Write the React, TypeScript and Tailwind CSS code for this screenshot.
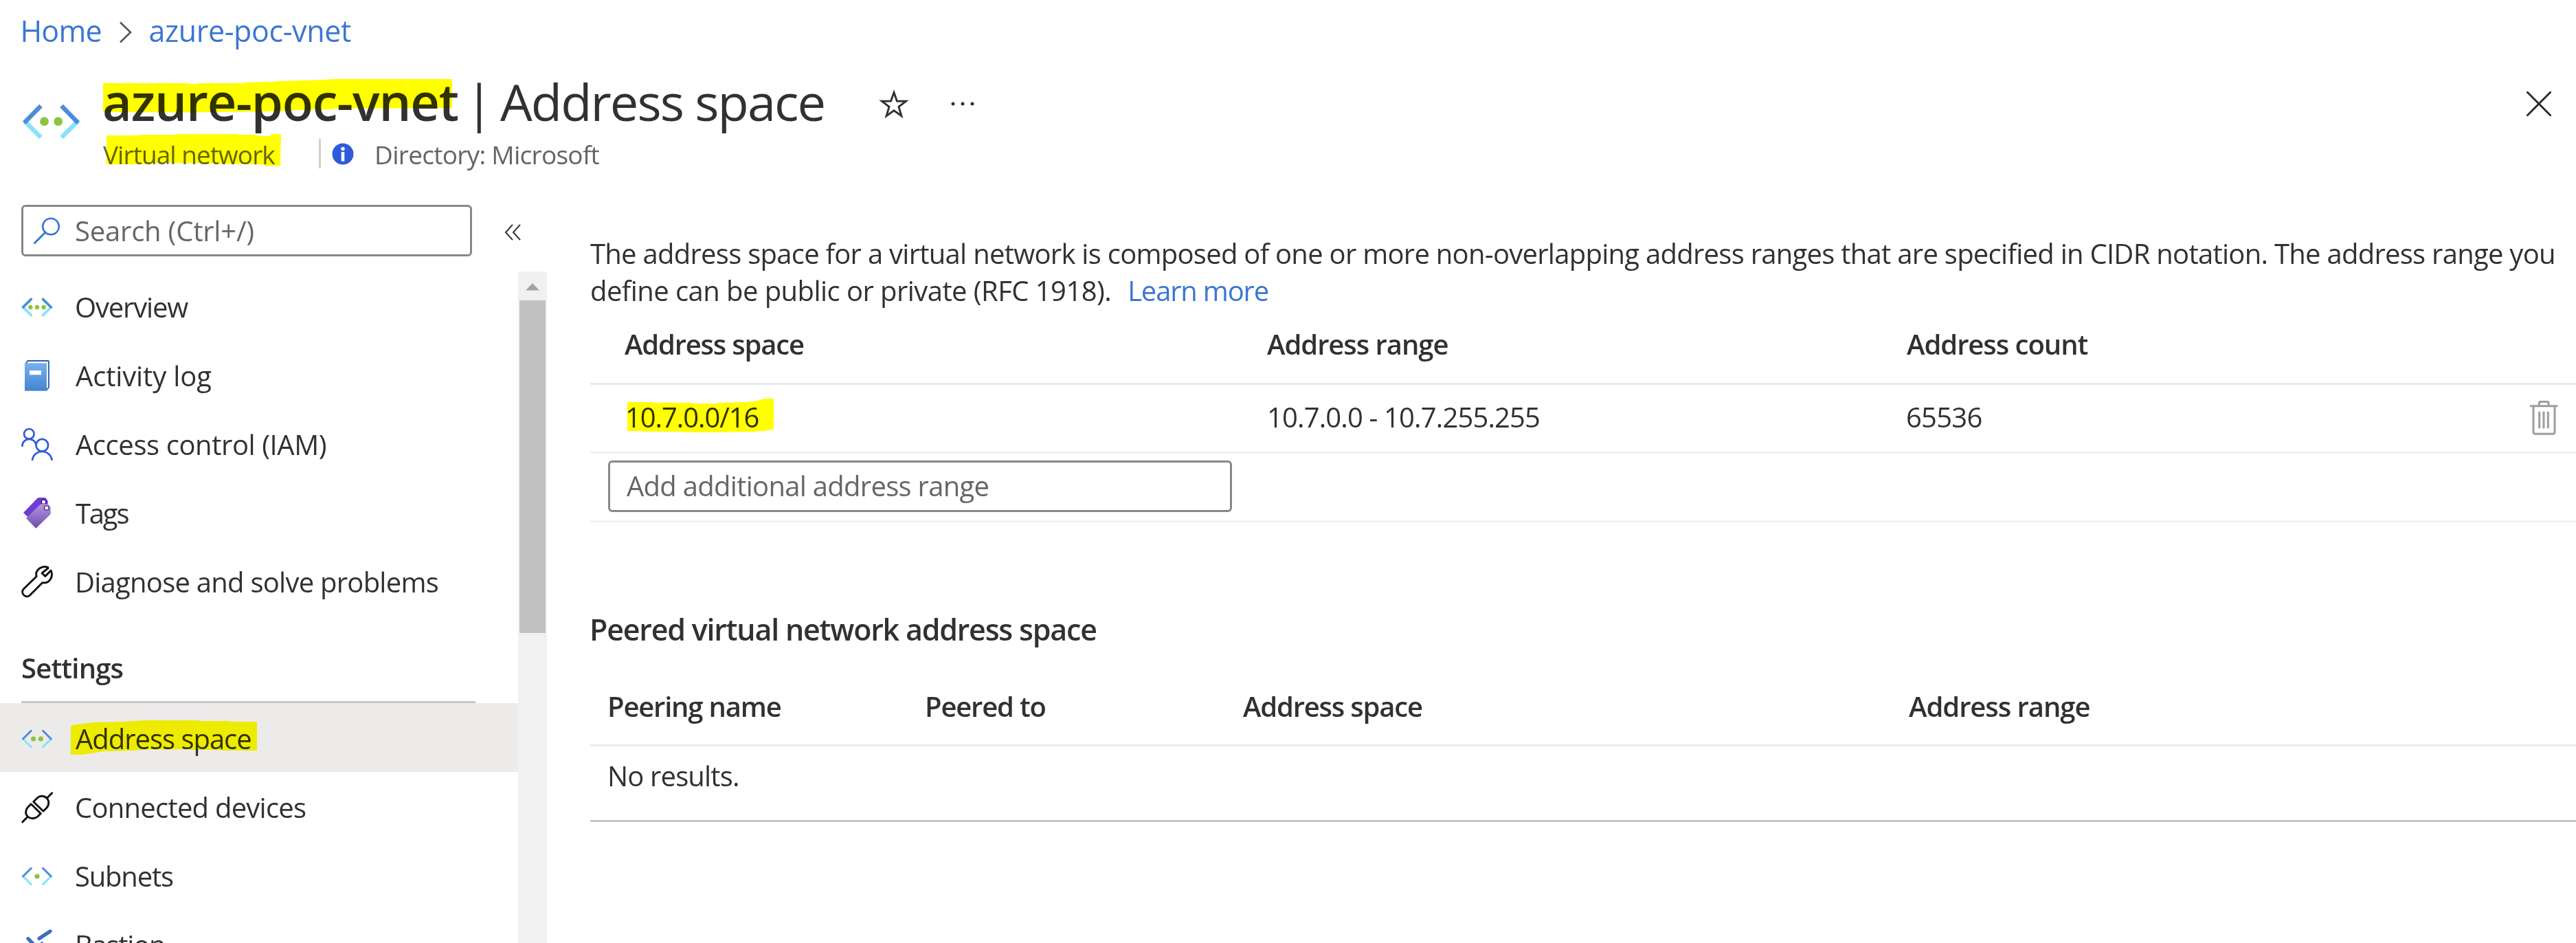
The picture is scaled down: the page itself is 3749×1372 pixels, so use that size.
import React from "react";

type IconProps = { children: React.ReactNode; className?: string };

function Icon({ children, className = "" }: IconProps) {
  return (
    <svg viewBox="0 0 48 48" fill="none" className={`h-12 w-12 shrink-0 overflow-visible ${className}`}>
      {children}
    </svg>
  );
}

function Brackets({ dots, weight = 3, r = 3.6 }: { dots: number[]; weight?: number; r?: number }) {
  return (
    <>
      <g strokeWidth={weight} strokeLinecap="round">
        <path d="M15.3 37.7 L3.5 26 M32.5 37.7 L44.3 26" stroke="#86e2fd" />
        <path d="M15.3 14.3 L3.5 26 M32.5 14.3 L44.3 26" stroke="#4a8edb" />
      </g>
      {dots.map((x) => (
        <circle key={x} cx={x} cy="26" r={r} fill="#8bc540" />
      ))}
    </>
  );
}

const OverviewIcon = () => (
  <Icon>
    <Brackets dots={[14.3, 24, 33.7]} weight={3.8} r={3.2} />
  </Icon>
);
const AddressIcon = () => (
  <Icon>
    <Brackets dots={[18.6, 29.3]} />
  </Icon>
);
const SubnetIcon = () => (
  <Icon>
    <Brackets dots={[24]} />
  </Icon>
);

const LogIcon = () => (
  <Icon>
    <defs>
      <linearGradient id="log" x1="0" y1="0" x2="0" y2="1">
        <stop stopColor="#77b1ee" />
        <stop offset="1" stopColor="#4583d1" />
      </linearGradient>
    </defs>
    <path d="M7.5 8 L10.5 4 H40 Q41 4 41 5 V42.5 L37.5 47" fill="#fff" stroke="#2a5ba6" strokeWidth="1.8" />
    <rect x="6" y="7.3" width="32" height="40.5" rx="1" fill="url(#log)" />
    <rect x="13" y="18" width="17" height="6.3" fill="#fff" />
  </Icon>
);

const AccessIcon = () => (
  <Icon>
    <g stroke="#2f5bdb" strokeWidth="2.7">
      <circle cx="12.3" cy="10.3" r="7.3" />
      <path d="M2.3 28.7 C2.3 22.5 6.5 18 12.3 18 C17 18 21 20.8 22.3 25.5" />
      <circle cx="31.3" cy="26.7" r="8.8" />
      <path d="M17 49 C17.5 41.5 23.5 36 31.3 36 C39 36 45 41.5 45.6 49" />
    </g>
  </Icon>
);

const TagsIcon = () => (
  <Icon>
    <defs>
      <linearGradient id="tag" x1="0" y1="0" x2="0" y2="1">
        <stop stopColor="#b796e0" />
        <stop offset="1" stopColor="#6a4bad" />
      </linearGradient>
    </defs>
    <path d="M4 25 L24 4.3 Q25.3 3 27 3 H34.5 Q36 3 37 4.2 L39.7 8 V14 L10.3 31 Z" fill="#6f3dd2" />
    <circle cx="33.5" cy="9.3" r="3.3" fill="#fff" stroke="#3a1d7f" strokeWidth="1.6" />
    <path d="M8 33 L28 13.5 Q29.3 12.3 31 12.3 H38.5 Q40 12.3 41 13.5 L43.7 17 V27 L22.3 47.7 Z" fill="url(#tag)" />
    <circle cx="37.8" cy="18" r="3.3" fill="#fff" stroke="#5c369e" strokeWidth="1.6" />
  </Icon>
);

const WrenchIcon = () => (
  <Icon>
    <path
      d="M41 5 C31.5 .5 20.5 8 23 17.8 L4.3 36 C-1 42 7.5 50.5 13.3 45.2 L31.8 26.7 C42 29 48 18 44.2 9 L35.8 17.4 L31 12.8 L40.8 5"
      stroke="#111"
      strokeWidth="2.9"
      strokeLinejoin="round"
    />
  </Icon>
);

const PlugIcon = () => (
  <Icon>
    <g stroke="#111" strokeWidth="2.9" strokeLinecap="round" strokeLinejoin="round">
      <path d="M45.7 4.7 L38.3 12.2 M2.7 47 L10.3 39.3" />
      <path d="M18.7 17.5 L33 31.3 L37.5 26.8 C42 22 41.5 15.5 38 12.2 C34 8.3 28 8.5 24.5 11.8 Z" />
      <path d="M15.2 20.8 L29.3 34.6 L24.8 39 C20.5 42.8 14 42.5 10.5 39.2 C6.5 35.3 6.8 29.5 10.3 25.8 Z" />
    </g>
  </Icon>
);

const BastionIcon = () => (
  <Icon>
    <g stroke="#3a6fc4" strokeWidth="5.2" strokeLinecap="round">
      <path d="M43 6 L27 16.5 M11 16.7 L22 28 M31 24 L40 34" />
    </g>
  </Icon>
);

type NavItem = { label: string; cls: string; icon: () => React.ReactElement; active?: boolean };

const topItems: NavItem[] = [
  { label: "Overview", cls: "tracking-[-1.18px] pl-[31px]", icon: OverviewIcon },
  { label: "Activity log", cls: "tracking-[-0.14px] pl-[32px]", icon: LogIcon },
  { label: "Access control (IAM)", cls: "tracking-[-0.42px] pl-[32px]", icon: AccessIcon },
  { label: "Tags", cls: "tracking-[-2.2px] pl-[32px]", icon: TagsIcon },
  { label: "Diagnose and solve problems", cls: "tracking-[-0.75px] pl-[31px]", icon: WrenchIcon },
];

const settingsItems: NavItem[] = [
  { label: "Address space", cls: "tracking-[-1.02px] pl-[32px]", icon: AddressIcon, active: true },
  { label: "Connected devices", cls: "tracking-[-0.76px] pl-[31px]", icon: PlugIcon },
  { label: "Subnets", cls: "tracking-[-1.2px] pl-[31px]", icon: SubnetIcon },
  { label: "Bastion", cls: "tracking-[-1.26px] pl-[31px]", icon: BastionIcon },
];

function NavRow({ item }: { item: NavItem }) {
  const I = item.icon;
  return (
    <li className={`flex h-[100px] shrink-0 items-center pl-[30px] ${item.active ? "bg-[#edebe9]" : ""}`}>
      <I />
      <span className={`pt-[4px] ${item.cls}`}>{item.label}</span>
    </li>
  );
}

const highlights = [
  "150,121 272,121 273,122 288,122 288,121 355,121 355,120 394,119 407,118 444,117 472,116 485,115 658,115 658,157 486,158 486,159 440,160 410,161.5 370,162.5 320,163 272,163.5 150,163",
  "155,197 203,197 203,196 257,196 257,195 347,195 347,196 373,196 373,197 386,198 394,198 394,195 409,195 408,241 388,242 385,240 371,239 310,238 240,237 200,239 155,239",
  "103,1056 110,1054 129,1052 135,1051 178,1050 197,1049 212,1048 290,1048 291,1049 335,1049 336,1050 374,1050 374,1092 321,1092 320,1091 276,1091 276,1090 212,1090.5 193,1092 150,1093 140,1095 120,1098 103,1098",
  "913,585 951,585 951,586 1009,586 1010,587 1044,587 1044,586 1085,585 1098,584 1106,582 1112,580 1126,580 1126,624 1119,626 1110,627 1098,628 1058,628.5 1058,629 995,629 995,628 936,628 935,627 913,627",
];

function Header() {
  return (
    <header className="flex h-[298px] shrink-0 flex-col">
      <nav className="flex h-[97px] items-start pt-[15px] text-[43px] leading-[60px] text-[#3b76d2]">
        <a className="ml-[29.5px] w-[144px] tracking-[-0.83px]">Home</a>
        <svg viewBox="0 0 18 32" className="mt-[16px] h-8 w-[18px] overflow-visible" fill="none">
          <path d="M1 1.5 L16 16 L1 30.5" stroke="#555" strokeWidth="2.6" />
        </svg>
        <a className="ml-[25px] tracking-[-0.4px]">azure-poc-vnet</a>
      </nav>
      <div className="flex">
        <svg viewBox="0 0 83 50" className="mt-[55px] ml-[33px] h-[50px] w-[83px] overflow-visible" fill="none">
          <g strokeWidth="6.4">
            <path d="M26.5 48 L3 24.5 M56.5 48 L80 24.5" stroke="#86e2fd" />
            <path d="M26.5 2 L2.2 26.8 M56.5 2 L80.8 26.8" stroke="#4a8edb" />
          </g>
          <circle cx="31.5" cy="24.7" r="6.4" fill="#8bc540" />
          <circle cx="51.7" cy="24.7" r="6.4" fill="#8bc540" />
        </svg>
        <div className="ml-[33px] flex flex-col">
          <div className="flex h-[103px] items-start text-[74px] leading-[102px] text-[#323130]">
            <h1 className="w-[528px] font-semibold tracking-[-1.15px] whitespace-nowrap">azure-poc-vnet</h1>
            <span className="w-[51px]">|</span>
            <span className="w-[552px] tracking-[-1.95px] whitespace-nowrap">Address space</span>
            <svg viewBox="0 0 42 42" className="mt-[34px] h-[42px] w-[42px] overflow-visible" fill="none">
              <path
                d="M21 3.5 L25.4 16 L38.6 16.2 L28 24.4 L31.9 37.6 L21 29.8 L10.1 37.6 L14 24.4 L3.4 16.2 L16.6 16 Z"
                stroke="#323130"
                strokeWidth="2.9"
              />
            </svg>
            <svg viewBox="0 0 34 6" className="mt-[51px] ml-[62px] h-[6px] w-[34px]">
              <circle cx="3" cy="3" r="2.5" fill="#323130" />
              <circle cx="17" cy="3" r="2.5" fill="#323130" />
              <circle cx="31" cy="3" r="2.5" fill="#323130" />
            </svg>
          </div>
          <div className="flex h-[50px] items-start text-[37px] leading-[50px] text-[#646464]">
            <span className="ml-[1px] w-[314px] tracking-[-0.95px] whitespace-nowrap">Virtual network</span>
            <div className="mt-[2px] h-[43px] w-[3px] bg-[#d2d0ce]" />
            <svg viewBox="0 0 32 32" className="mt-[8px] ml-[16px] h-8 w-8">
              <circle cx="16" cy="16" r="15.5" fill="#2f5bdb" />
              <circle cx="16" cy="8.5" r="2.7" fill="#fff" />
              <rect x="13.7" y="13" width="4.6" height="13.5" fill="#fff" />
            </svg>
            <span className="ml-[30px] tracking-[-0.72px] whitespace-nowrap">Directory: Microsoft</span>
          </div>
        </div>
        <svg viewBox="0 0 36 36" className="mt-[36px] mr-[36px] ml-auto h-9 w-9" fill="none">
          <path d="M1.3 1.3 L34.7 34.7 M34.7 1.3 L1.3 34.7" stroke="#2b2b2b" strokeWidth="2.9" strokeLinecap="round" />
        </svg>
      </div>
    </header>
  );
}

function Sidebar() {
  return (
    <aside className="flex w-[796px] shrink-0 flex-col">
      <div className="flex h-[97px] items-start">
        <div className="ml-[31px] flex h-[75px] w-[656px] items-center rounded-[6px] border-3 border-[#8a8886] text-[#666]">
          <svg viewBox="0 0 38 39" className="ml-[15px] h-[39px] w-[38px] shrink-0" fill="none">
            <circle cx="25" cy="13.5" r="11.8" stroke="#3b76d2" strokeWidth="2.6" />
            <path d="M17 22 L1.5 37.5" stroke="#3b76d2" strokeWidth="3" strokeLinecap="round" />
          </svg>
          <span className="pl-[22px] tracking-[-0.21px]">Search (Ctrl+/)</span>
        </div>
        <svg viewBox="0 0 24 24" className="mt-[28px] ml-[47px] h-6 w-6" fill="none">
          <path d="M12 .8 L2 12 L12 23.2 M23 .8 L13 12 L23 23.2" stroke="#323130" strokeWidth="2" />
        </svg>
      </div>
      <div className="flex h-[977px]">
        <div className="w-[754px] overflow-hidden">
          <ul>
            {topItems.map((i) => (
              <NavRow key={i.label} item={i} />
            ))}
          </ul>
          <h2 className="mr-[62px] ml-[31px] flex h-[128px] items-start border-b-3 border-[#c8c6c4] pt-[50px] leading-[54px] font-semibold tracking-[-0.83px]">
            Settings
          </h2>
          <ul>
            {settingsItems.map((i) => (
              <NavRow key={i.label} item={i} />
            ))}
          </ul>
        </div>
        <div className="w-[42px] bg-[#f1f1f1] px-[2px]">
          <svg viewBox="0 0 38 42" className="h-[42px] w-[38px]">
            <path d="M19 17 L29 27.5 H9 Z" fill="#a3a3a3" />
          </svg>
          <div className="h-[484px] bg-[#c1c1c1]" />
        </div>
      </div>
    </aside>
  );
}

const TrashIcon = () => (
  <svg viewBox="0 0 44 54" className="h-[54px] w-11" fill="none" stroke="#9d9d9d" strokeWidth="3">
    <path d="M2 10.7 H42.3 M15.5 10 V6 Q15.5 4.5 17 4.5 H27.5 Q29 4.5 29 6 V10" />
    <path d="M7 11 V48.5 Q7 51.3 10 51.3 H35 Q38 51.3 38 48.5 V11 M15.7 18.7 V43.3 M22 18.7 V43.3 M28.3 18.7 V43.3" />
  </svg>
);

function Main() {
  return (
    <main className="ml-[63px] w-[2890px] pt-[44px]">
      <p className="h-[106px] leading-[54px] whitespace-nowrap">
        <span className="tracking-[-0.73px]">
          The address space for a virtual network is composed of one or more non-overlapping address ranges that are
          specified in CIDR notation. The address range you
        </span>
        <br />
        <span className="tracking-[-0.56px]">define can be public or private (RFC 1918).</span>
        <a className="ml-[24px] tracking-[-1.2px] text-[#3b76d2]">Learn more</a>
      </p>

      <section>
        <div className="flex h-[112px] items-center border-b-3 border-[#eaeaea] pb-[3px] pl-[50px] font-semibold">
          <span className="w-[935px] tracking-[-1.2px]">Address space</span>
          <span className="w-[931px] tracking-[-1.04px]">Address range</span>
          <span className="tracking-[-1.04px]">Address count</span>
        </div>
        <div className="flex h-[100px] items-center border-b-3 border-[#f2f2f2] pl-[51px]">
          <span className="w-[934px] pb-[3px] tracking-[-1.08px]">10.7.0.0/16</span>
          <span className="w-[930px] pb-[3px] tracking-[-0.86px]">10.7.0.0 - 10.7.255.255</span>
          <span className="pb-[3px] tracking-[-0.75px]">65536</span>
          <div className="mr-[25px] mb-[3px] ml-auto">
            <TrashIcon />
          </div>
        </div>
        <div className="h-[100px] border-b-3 border-[#f2f2f2] pt-[10px] pl-[26px]">
          <div className="flex h-[75px] w-[908px] items-center rounded-[6px] border-3 border-[#8a8886] pb-[1px] pl-[24px] tracking-[-0.72px] text-[#666]">
            Add additional address range
          </div>
        </div>
      </section>

      <section className="pt-[126px]">
        <h2 className="h-[82px] text-[43px] leading-[60px] font-semibold tracking-[-1.22px]">
          <span className="-ml-[1px]">Peered virtual network address space</span>
        </h2>
        <div className="flex h-[118px] items-center border-b-3 border-[#eaeaea] pt-[5px] pl-[25px] font-semibold tracking-[-1.2px]">
          <span className="w-[462px]">Peering name</span>
          <span className="w-[463px]">Peered to</span>
          <span className="w-[969px]">Address space</span>
          <span className="tracking-[-1.04px]">Address range</span>
        </div>
        <div className="flex h-[110px] items-center border-b-3 border-[#c8c8c8] pb-[22px] pl-[25px] tracking-[-0.85px]">
          No results.
        </div>
      </section>
    </main>
  );
}

export default function App() {
  return (
    <div className="relative flex h-[1372px] w-[3749px] flex-col overflow-hidden bg-white font-['Open_Sans','Noto_Sans',sans-serif] text-[40px] leading-[54px] text-[#323130]">
      <Header />
      <div className="flex">
        <Sidebar />
        <Main />
      </div>
      <svg viewBox="0 0 3749 1372" className="pointer-events-none absolute inset-0 h-full w-full mix-blend-multiply">
        {highlights.map((p) => (
          <polygon key={p} points={p} fill="#ffff00" />
        ))}
      </svg>
    </div>
  );
}
